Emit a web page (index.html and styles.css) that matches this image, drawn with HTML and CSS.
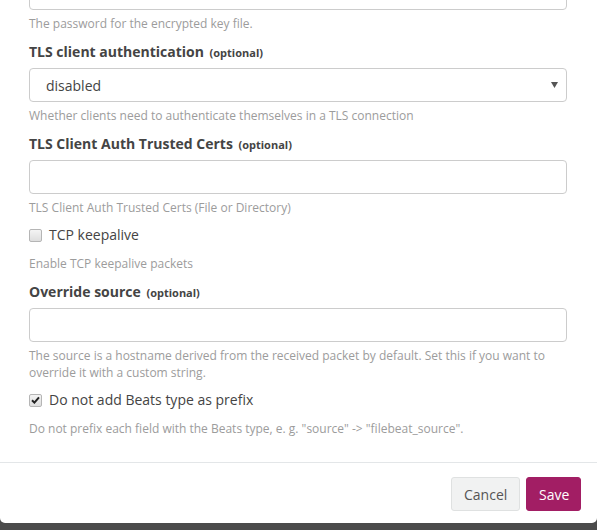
FILE: index.html
```html
<!DOCTYPE html>
<html>
<head>
<meta charset="utf-8">
<link rel="stylesheet" href="styles.css">
</head>
<body>
<div class="modal">
  <div class="modal-body">
    <div class="group">
      <input class="control top-control" type="password">
      <p class="help">The password for the encrypted key file.</p>
    </div>
    <div class="group">
      <label class="field-label">TLS client authentication <small>(optional)</small></label>
      <select class="control select">
        <option>disabled</option>
      </select>
      <p class="help">Whether clients need to authenticate themselves in a TLS connection</p>
    </div>
    <div class="group">
      <label class="field-label">TLS Client Auth Trusted Certs <small>(optional)</small></label>
      <input class="control" type="text">
      <p class="help">TLS Client Auth Trusted Certs (File or Directory)</p>
    </div>
    <div class="group">
      <label class="check"><span class="box"></span>TCP keepalive</label>
      <p class="help help-check">Enable TCP keepalive packets</p>
    </div>
    <div class="group">
      <label class="field-label">Override source <small>(optional)</small></label>
      <input class="control" type="text">
      <p class="help">The source is a hostname derived from the received packet by default. Set this if you want to override it with a custom string.</p>
    </div>
    <div class="group last">
      <label class="check"><span class="box checked"><svg width="9" height="8" viewBox="0 0 9 8"><path d="M1 4.2 L3.4 6.6 L8 1.4" fill="none" stroke="#222" stroke-width="2"/></svg></span>Do not add Beats type as prefix</label>
      <p class="help help-check">Do not prefix each field with the Beats type, e. g. "source" -&gt; "filebeat_source".</p>
    </div>
  </div>
  <div class="modal-footer">
    <button class="btn btn-default">Cancel</button>
    <button class="btn btn-primary">Save</button>
  </div>
</div>
</body>
</html>
```
FILE: styles.css
```css
* { box-sizing: border-box; }
html, body { margin: 0; padding: 0; }
body {
  background: #4b4b4b;
  font-family: "Open Sans", "Noto Sans", sans-serif;
  color: #444;
  width: 597px;
  height: 530px;
  overflow: hidden;
}
.modal {
  background: #fff;
  border-radius: 0 0 5px 5px;
}
.modal-body {
  padding: 0 30px 25px 29px;
}
.group { margin-bottom: 10px; }
.group.last { margin-bottom: 0; }
.field-label {
  display: block;
  font-weight: 700;
  font-size: 14px;
  line-height: 20px;
  color: #444;
  margin-bottom: 5px;
}
.field-label small {
  font-size: 11px;
  font-weight: 700;
  margin-left: 2px;
}
.control {
  display: block;
  width: 538px;
  height: 34px;
  border: 1px solid #ccc;
  border-radius: 4px;
  background: #fff;
  font-family: inherit;
  font-size: 14px;
  color: #444;
  padding: 6px 12px;
  margin: 0;
  outline: none;
}
.top-control { margin-top: -24px; }
.select {
  -webkit-appearance: none;
  appearance: none;
  padding-left: 16px;
  background-image: url("data:image/svg+xml,%3Csvg xmlns='http://www.w3.org/2000/svg' width='7' height='6'%3E%3Cpath d='M0 0H7L3.5 6Z' fill='%23555'/%3E%3C/svg%3E");
  background-repeat: no-repeat;
  background-position: right 8px center;
}
.help {
  margin: 5px 0 0;
  font-size: 12px;
  line-height: 17px;
  color: #9c9c9c;
}
.help-check { margin-top: 10px; }
.check {
  display: flex;
  align-items: center;
  font-size: 14px;
  line-height: 20px;
  color: #444;
  margin-top: -1px;
}
.box {
  width: 13px;
  height: 13px;
  border: 1px solid #b5b5b5;
  border-radius: 2px;
  background: linear-gradient(#f4f4f4, #dedede);
  margin-right: 7px;
  display: flex;
  align-items: center;
  justify-content: center;
}
.modal-footer {
  border-top: 1px solid #e3e6e8;
  padding: 14px 16px 12px;
  display: flex;
  justify-content: flex-end;
  gap: 6px;
}
.btn {
  height: 34px;
  font-family: inherit;
  font-size: 14px;
  border-radius: 3px;
  padding: 0 12px;
  margin: 0;
}
.btn-default {
  background: #f1f2f2;
  border: 1px solid #dfe1e1;
  color: #555;
  width: 69px;
}
.btn-primary {
  background: #a21e64;
  border: 1px solid #a21e64;
  color: #fff;
  width: 55px;
}
```
